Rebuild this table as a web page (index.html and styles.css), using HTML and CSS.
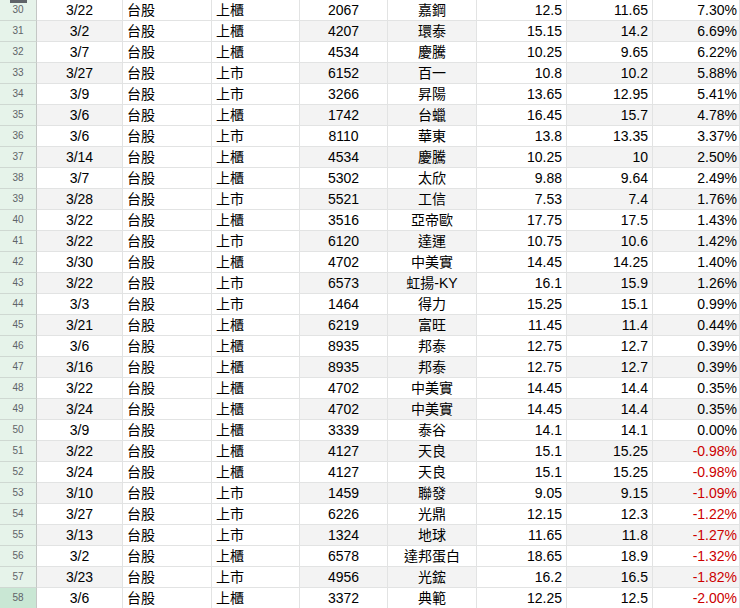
FILE: index.html
```html
<!DOCTYPE html>
<html lang="zh-Hant">
<head>
<meta charset="utf-8">
<link rel="stylesheet" href="styles.css">
</head>
<body>
<div class="sheet">
  <div class="row"><div class="rh first"><span class="handle"></span>30</div><div class="c date">3/22</div><div class="c l">台股</div><div class="c l">上櫃</div><div class="c ctr">2067</div><div class="c ctr">嘉鋼</div><div class="c r">12.5</div><div class="c r">11.65</div><div class="c r">7.30%</div></div>
  <div class="row band"><div class="rh">31</div><div class="c date">3/2</div><div class="c l">台股</div><div class="c l">上櫃</div><div class="c ctr">4207</div><div class="c ctr">環泰</div><div class="c r">15.15</div><div class="c r">14.2</div><div class="c r">6.69%</div></div>
  <div class="row"><div class="rh">32</div><div class="c date">3/7</div><div class="c l">台股</div><div class="c l">上櫃</div><div class="c ctr">4534</div><div class="c ctr">慶騰</div><div class="c r">10.25</div><div class="c r">9.65</div><div class="c r">6.22%</div></div>
  <div class="row band"><div class="rh">33</div><div class="c date">3/27</div><div class="c l">台股</div><div class="c l">上市</div><div class="c ctr">6152</div><div class="c ctr">百一</div><div class="c r">10.8</div><div class="c r">10.2</div><div class="c r">5.88%</div></div>
  <div class="row"><div class="rh">34</div><div class="c date">3/9</div><div class="c l">台股</div><div class="c l">上市</div><div class="c ctr">3266</div><div class="c ctr">昇陽</div><div class="c r">13.65</div><div class="c r">12.95</div><div class="c r">5.41%</div></div>
  <div class="row band"><div class="rh">35</div><div class="c date">3/6</div><div class="c l">台股</div><div class="c l">上櫃</div><div class="c ctr">1742</div><div class="c ctr">台蠟</div><div class="c r">16.45</div><div class="c r">15.7</div><div class="c r">4.78%</div></div>
  <div class="row"><div class="rh">36</div><div class="c date">3/6</div><div class="c l">台股</div><div class="c l">上市</div><div class="c ctr">8110</div><div class="c ctr">華東</div><div class="c r">13.8</div><div class="c r">13.35</div><div class="c r">3.37%</div></div>
  <div class="row band"><div class="rh">37</div><div class="c date">3/14</div><div class="c l">台股</div><div class="c l">上櫃</div><div class="c ctr">4534</div><div class="c ctr">慶騰</div><div class="c r">10.25</div><div class="c r">10</div><div class="c r">2.50%</div></div>
  <div class="row"><div class="rh">38</div><div class="c date">3/7</div><div class="c l">台股</div><div class="c l">上櫃</div><div class="c ctr">5302</div><div class="c ctr">太欣</div><div class="c r">9.88</div><div class="c r">9.64</div><div class="c r">2.49%</div></div>
  <div class="row band"><div class="rh">39</div><div class="c date">3/28</div><div class="c l">台股</div><div class="c l">上市</div><div class="c ctr">5521</div><div class="c ctr">工信</div><div class="c r">7.53</div><div class="c r">7.4</div><div class="c r">1.76%</div></div>
  <div class="row"><div class="rh">40</div><div class="c date">3/22</div><div class="c l">台股</div><div class="c l">上櫃</div><div class="c ctr">3516</div><div class="c ctr">亞帝歐</div><div class="c r">17.75</div><div class="c r">17.5</div><div class="c r">1.43%</div></div>
  <div class="row band"><div class="rh">41</div><div class="c date">3/22</div><div class="c l">台股</div><div class="c l">上市</div><div class="c ctr">6120</div><div class="c ctr">達運</div><div class="c r">10.75</div><div class="c r">10.6</div><div class="c r">1.42%</div></div>
  <div class="row"><div class="rh">42</div><div class="c date">3/30</div><div class="c l">台股</div><div class="c l">上櫃</div><div class="c ctr">4702</div><div class="c ctr">中美實</div><div class="c r">14.45</div><div class="c r">14.25</div><div class="c r">1.40%</div></div>
  <div class="row band"><div class="rh">43</div><div class="c date">3/22</div><div class="c l">台股</div><div class="c l">上市</div><div class="c ctr">6573</div><div class="c ctr">虹揚-KY</div><div class="c r">16.1</div><div class="c r">15.9</div><div class="c r">1.26%</div></div>
  <div class="row"><div class="rh">44</div><div class="c date">3/3</div><div class="c l">台股</div><div class="c l">上市</div><div class="c ctr">1464</div><div class="c ctr">得力</div><div class="c r">15.25</div><div class="c r">15.1</div><div class="c r">0.99%</div></div>
  <div class="row band"><div class="rh">45</div><div class="c date">3/21</div><div class="c l">台股</div><div class="c l">上櫃</div><div class="c ctr">6219</div><div class="c ctr">富旺</div><div class="c r">11.45</div><div class="c r">11.4</div><div class="c r">0.44%</div></div>
  <div class="row"><div class="rh">46</div><div class="c date">3/6</div><div class="c l">台股</div><div class="c l">上櫃</div><div class="c ctr">8935</div><div class="c ctr">邦泰</div><div class="c r">12.75</div><div class="c r">12.7</div><div class="c r">0.39%</div></div>
  <div class="row band"><div class="rh">47</div><div class="c date">3/16</div><div class="c l">台股</div><div class="c l">上櫃</div><div class="c ctr">8935</div><div class="c ctr">邦泰</div><div class="c r">12.75</div><div class="c r">12.7</div><div class="c r">0.39%</div></div>
  <div class="row"><div class="rh">48</div><div class="c date">3/22</div><div class="c l">台股</div><div class="c l">上櫃</div><div class="c ctr">4702</div><div class="c ctr">中美實</div><div class="c r">14.45</div><div class="c r">14.4</div><div class="c r">0.35%</div></div>
  <div class="row band"><div class="rh">49</div><div class="c date">3/24</div><div class="c l">台股</div><div class="c l">上櫃</div><div class="c ctr">4702</div><div class="c ctr">中美實</div><div class="c r">14.45</div><div class="c r">14.4</div><div class="c r">0.35%</div></div>
  <div class="row"><div class="rh">50</div><div class="c date">3/9</div><div class="c l">台股</div><div class="c l">上櫃</div><div class="c ctr">3339</div><div class="c ctr">泰谷</div><div class="c r">14.1</div><div class="c r">14.1</div><div class="c r">0.00%</div></div>
  <div class="row band"><div class="rh">51</div><div class="c date">3/22</div><div class="c l">台股</div><div class="c l">上櫃</div><div class="c ctr">4127</div><div class="c ctr">天良</div><div class="c r">15.1</div><div class="c r">15.25</div><div class="c r neg">-0.98%</div></div>
  <div class="row"><div class="rh">52</div><div class="c date">3/24</div><div class="c l">台股</div><div class="c l">上櫃</div><div class="c ctr">4127</div><div class="c ctr">天良</div><div class="c r">15.1</div><div class="c r">15.25</div><div class="c r neg">-0.98%</div></div>
  <div class="row band"><div class="rh">53</div><div class="c date">3/10</div><div class="c l">台股</div><div class="c l">上市</div><div class="c ctr">1459</div><div class="c ctr">聯發</div><div class="c r">9.05</div><div class="c r">9.15</div><div class="c r neg">-1.09%</div></div>
  <div class="row"><div class="rh">54</div><div class="c date">3/27</div><div class="c l">台股</div><div class="c l">上市</div><div class="c ctr">6226</div><div class="c ctr">光鼎</div><div class="c r">12.15</div><div class="c r">12.3</div><div class="c r neg">-1.22%</div></div>
  <div class="row band"><div class="rh">55</div><div class="c date">3/13</div><div class="c l">台股</div><div class="c l">上市</div><div class="c ctr">1324</div><div class="c ctr">地球</div><div class="c r">11.65</div><div class="c r">11.8</div><div class="c r neg">-1.27%</div></div>
  <div class="row"><div class="rh">56</div><div class="c date">3/2</div><div class="c l">台股</div><div class="c l">上櫃</div><div class="c ctr">6578</div><div class="c ctr">達邦蛋白</div><div class="c r">18.65</div><div class="c r">18.9</div><div class="c r neg">-1.32%</div></div>
  <div class="row band"><div class="rh">57</div><div class="c date">3/23</div><div class="c l">台股</div><div class="c l">上市</div><div class="c ctr">4956</div><div class="c ctr">光鋐</div><div class="c r">16.2</div><div class="c r">16.5</div><div class="c r neg">-1.82%</div></div>
  <div class="row"><div class="rh sel">58</div><div class="c date">3/6</div><div class="c l">台股</div><div class="c l">上櫃</div><div class="c ctr">3372</div><div class="c ctr">典範</div><div class="c r">12.25</div><div class="c r">12.5</div><div class="c r neg">-2.00%</div></div>
</div>
</body>
</html>
```

FILE: styles.css
```css
html, body {
  margin: 0;
  padding: 0;
  background: #ffffff;
}
body {
  width: 740px;
  height: 608px;
  overflow: hidden;
  font-family: "Liberation Sans", Arial, "Noto Sans CJK TC", sans-serif;
  font-size: 14px;
  color: #000000;
}
.sheet {
  display: flex;
  flex-direction: column;
}
.row {
  display: grid;
  grid-template-columns: 37px 86px 89px 88px 88px 89px 90px 86px 1fr;
  height: 21px;
}
.c, .rh {
  box-sizing: border-box;
  border-right: 1px solid #e2e3e3;
  border-bottom: 1px solid #e2e3e3;
  display: flex;
  align-items: center;
  white-space: nowrap;
  overflow: hidden;
  line-height: 20px;
}
.rh {
  position: relative;
  justify-content: center;
  background: #e6f3ea;
  border-right-color: #c4c7c5;
  border-bottom-color: #cfd8d2;
  font-size: 10px;
  color: #5f6368;
}
.rh.sel {
  background: #c9e7d4;
}
.handle {
  position: absolute;
  left: 10px;
  top: 0;
  width: 17px;
  height: 3px;
  background: #5f6368;
}
.date {
  justify-content: center;
}
.l {
  justify-content: flex-start;
  padding-left: 4px;
}
.ctr {
  justify-content: center;
}
.r {
  justify-content: flex-end;
  padding-right: 4px;
}
.c:last-child {
  padding-right: 2px;
}
.neg {
  color: #cc0000;
}
.band .c:nth-child(2),
.band .c:nth-child(5),
.band .c:nth-child(6),
.band .c:nth-child(8),
.band .c:nth-child(9) {
  background: #f3f3f3;
}
```
